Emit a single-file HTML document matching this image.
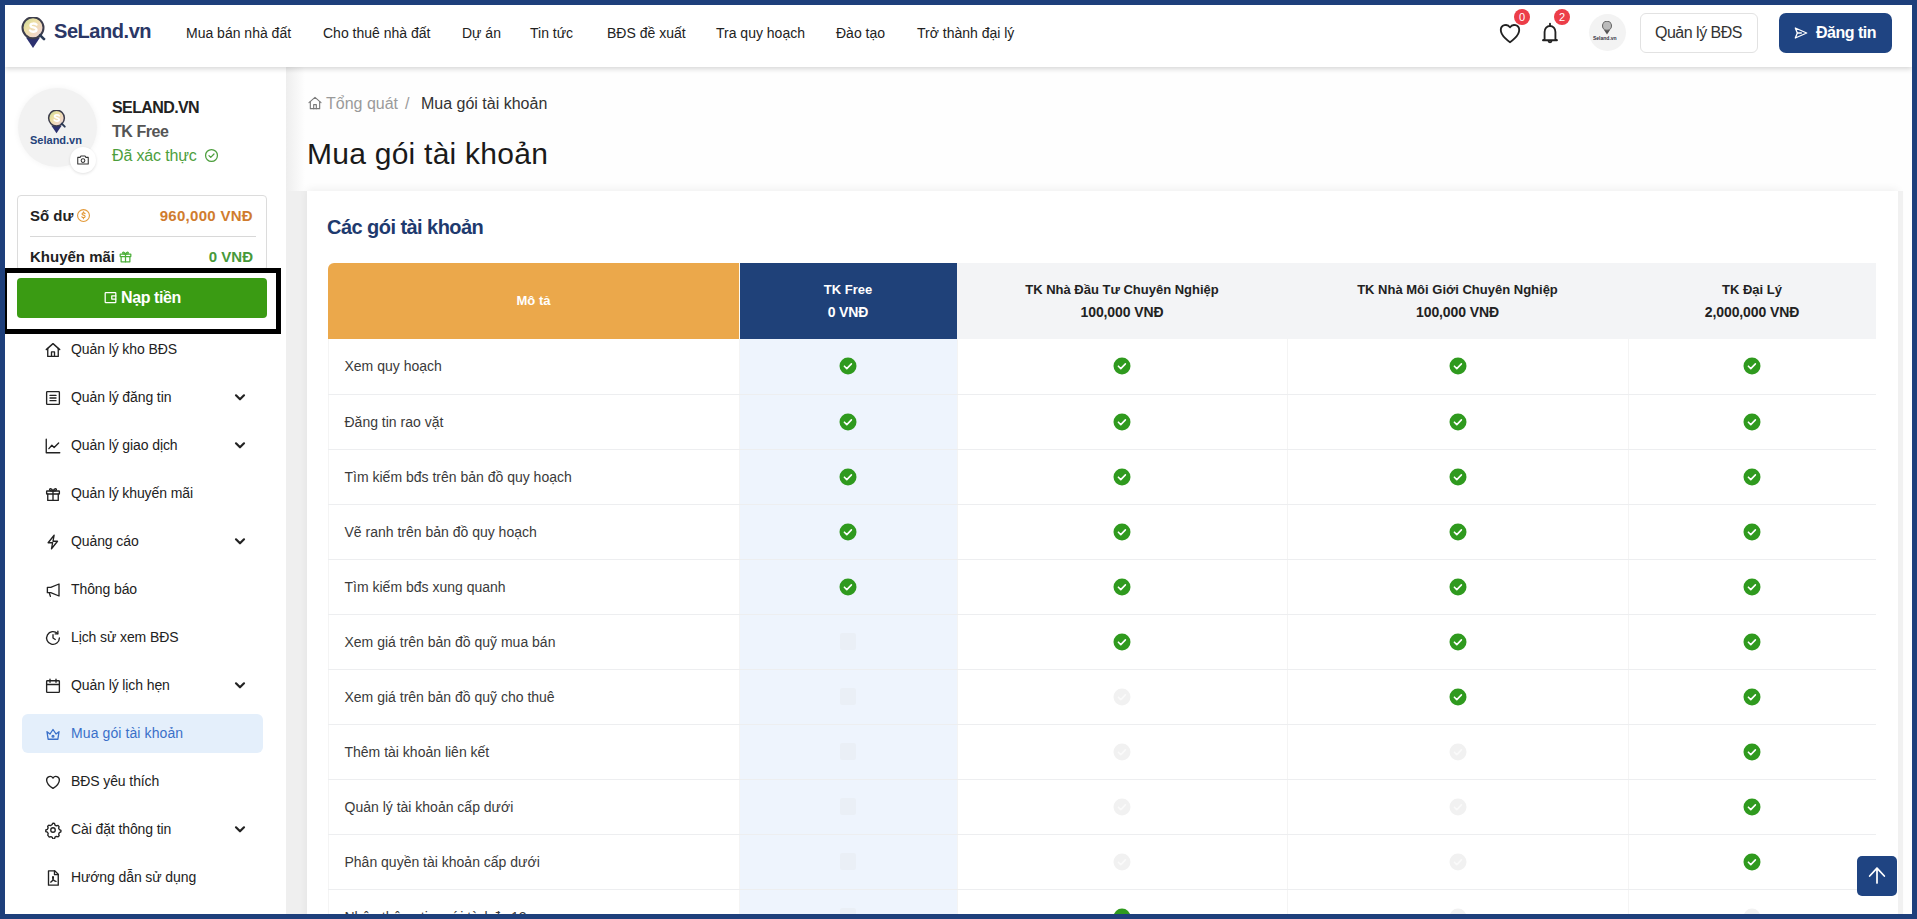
<!DOCTYPE html><html><head><meta charset="utf-8"><style>
*{box-sizing:border-box;margin:0;padding:0}
html,body{width:1917px;height:919px;overflow:hidden;background:#fefefe;font-family:"Liberation Sans",sans-serif;color:#222}
.a{position:absolute}
.t{position:absolute;white-space:nowrap}
.nav{position:absolute;top:25px;font-size:14px;line-height:16px;color:#222;white-space:nowrap}
.mi{position:absolute;left:71px;font-size:14px;line-height:16px;color:#222;white-space:nowrap;letter-spacing:-0.1px}
.ic{position:absolute;left:44px;width:18px;height:18px}
.ch{position:absolute;left:232px;width:16px;height:16px}
table{border-collapse:collapse;table-layout:fixed}
th{height:76px;font-size:13px;font-weight:bold;line-height:22px;text-align:center;background:#f3f4f6;color:#222;padding:0}
td{height:55px;border-bottom:1px solid #edeef0;border-left:1px solid #f4f4f4;font-size:14px;color:#3a3a3a;text-align:center;padding:0}
td.d{text-align:left;padding-left:16px}
b.p{font-size:14px;letter-spacing:-0.1px}
td.f{background:#eef4fd}
td svg{display:block;margin:auto}
</style></head><body>
<div class="a" style="left:286px;top:67px;width:21px;height:124px;background:linear-gradient(90deg,#eeeeee 0,#f2f2f2 5px,#fefefe 19px)"></div>
<div class="a" style="left:286px;top:191px;width:21px;height:728px;background:#efefef"></div>
<div class="a" style="left:307px;top:191px;width:1591px;height:740px;background:#fff;box-shadow:0 -2px 8px rgba(0,0,0,.06)"></div>
<div class="t" style="left:327px;top:216px;font-size:20px;line-height:22px;font-weight:bold;color:#1e3a6e;letter-spacing:-0.55px">Các gói tài khoản</div>
<div class="a" style="left:307px;top:95px"><svg width="16" height="16" viewBox="0 0 24 24" fill="none" stroke="#7a7a7a" stroke-width="1.7" stroke-linecap="round" stroke-linejoin="round"><path d="M3 11.5 12 3.5l9 8"/><path d="M5 9.8V20.5h14V9.8"/><path d="M10 20.5v-6h4v6"/></svg></div>
<div class="t" style="left:326px;top:95px;font-size:16px;line-height:18px;color:#9a9a9a">Tổng quát</div>
<div class="t" style="left:405px;top:95px;font-size:16px;line-height:18px;color:#9a9a9a">/</div>
<div class="t" style="left:421px;top:95px;font-size:16px;line-height:18px;color:#333">Mua gói tài khoản</div>
<div class="t" style="left:307px;top:138px;font-size:30px;line-height:32px;color:#1a1a1a;letter-spacing:0.25px">Mua gói tài khoản</div>
<table class="a" style="left:327.5px;top:263px;width:1548px"><colgroup><col style="width:411px"><col style="width:218px"><col style="width:330px"><col style="width:341px"><col style="width:248px"></colgroup><tr><th style="background:#eba84b;color:#fff;border-top-left-radius:6px">Mô tả</th><th style="background:#1f4179;color:#fff;box-shadow:inset 1px 0 0 #fdfaf2">TK Free<br><b class=p>0 VNĐ</b></th><th>TK Nhà Đầu Tư Chuyên Nghiệp<br><b class=p>100,000 VNĐ</b></th><th>TK Nhà Môi Giới Chuyên Nghiệp<br><b class=p>100,000 VNĐ</b></th><th>TK Đại Lý<br><b class=p>2,000,000 VNĐ</b></th></tr><tr><td class="d">Xem quy hoạch</td><td class="f"><svg width="18" height="18" viewBox="0 0 18 18"><circle cx="9" cy="9" r="8.5" fill="#2f9a1e"/><path d="M5.4 9.2l2.4 2.4 4.6-4.7" fill="none" stroke="#fff" stroke-width="1.6" stroke-linecap="round" stroke-linejoin="round"/></svg></td><td><svg width="18" height="18" viewBox="0 0 18 18"><circle cx="9" cy="9" r="8.5" fill="#2f9a1e"/><path d="M5.4 9.2l2.4 2.4 4.6-4.7" fill="none" stroke="#fff" stroke-width="1.6" stroke-linecap="round" stroke-linejoin="round"/></svg></td><td><svg width="18" height="18" viewBox="0 0 18 18"><circle cx="9" cy="9" r="8.5" fill="#2f9a1e"/><path d="M5.4 9.2l2.4 2.4 4.6-4.7" fill="none" stroke="#fff" stroke-width="1.6" stroke-linecap="round" stroke-linejoin="round"/></svg></td><td><svg width="18" height="18" viewBox="0 0 18 18"><circle cx="9" cy="9" r="8.5" fill="#2f9a1e"/><path d="M5.4 9.2l2.4 2.4 4.6-4.7" fill="none" stroke="#fff" stroke-width="1.6" stroke-linecap="round" stroke-linejoin="round"/></svg></td></tr><tr><td class="d">Đăng tin rao vặt</td><td class="f"><svg width="18" height="18" viewBox="0 0 18 18"><circle cx="9" cy="9" r="8.5" fill="#2f9a1e"/><path d="M5.4 9.2l2.4 2.4 4.6-4.7" fill="none" stroke="#fff" stroke-width="1.6" stroke-linecap="round" stroke-linejoin="round"/></svg></td><td><svg width="18" height="18" viewBox="0 0 18 18"><circle cx="9" cy="9" r="8.5" fill="#2f9a1e"/><path d="M5.4 9.2l2.4 2.4 4.6-4.7" fill="none" stroke="#fff" stroke-width="1.6" stroke-linecap="round" stroke-linejoin="round"/></svg></td><td><svg width="18" height="18" viewBox="0 0 18 18"><circle cx="9" cy="9" r="8.5" fill="#2f9a1e"/><path d="M5.4 9.2l2.4 2.4 4.6-4.7" fill="none" stroke="#fff" stroke-width="1.6" stroke-linecap="round" stroke-linejoin="round"/></svg></td><td><svg width="18" height="18" viewBox="0 0 18 18"><circle cx="9" cy="9" r="8.5" fill="#2f9a1e"/><path d="M5.4 9.2l2.4 2.4 4.6-4.7" fill="none" stroke="#fff" stroke-width="1.6" stroke-linecap="round" stroke-linejoin="round"/></svg></td></tr><tr><td class="d">Tìm kiếm bđs trên bản đồ quy hoạch</td><td class="f"><svg width="18" height="18" viewBox="0 0 18 18"><circle cx="9" cy="9" r="8.5" fill="#2f9a1e"/><path d="M5.4 9.2l2.4 2.4 4.6-4.7" fill="none" stroke="#fff" stroke-width="1.6" stroke-linecap="round" stroke-linejoin="round"/></svg></td><td><svg width="18" height="18" viewBox="0 0 18 18"><circle cx="9" cy="9" r="8.5" fill="#2f9a1e"/><path d="M5.4 9.2l2.4 2.4 4.6-4.7" fill="none" stroke="#fff" stroke-width="1.6" stroke-linecap="round" stroke-linejoin="round"/></svg></td><td><svg width="18" height="18" viewBox="0 0 18 18"><circle cx="9" cy="9" r="8.5" fill="#2f9a1e"/><path d="M5.4 9.2l2.4 2.4 4.6-4.7" fill="none" stroke="#fff" stroke-width="1.6" stroke-linecap="round" stroke-linejoin="round"/></svg></td><td><svg width="18" height="18" viewBox="0 0 18 18"><circle cx="9" cy="9" r="8.5" fill="#2f9a1e"/><path d="M5.4 9.2l2.4 2.4 4.6-4.7" fill="none" stroke="#fff" stroke-width="1.6" stroke-linecap="round" stroke-linejoin="round"/></svg></td></tr><tr><td class="d">Vẽ ranh trên bản đồ quy hoạch</td><td class="f"><svg width="18" height="18" viewBox="0 0 18 18"><circle cx="9" cy="9" r="8.5" fill="#2f9a1e"/><path d="M5.4 9.2l2.4 2.4 4.6-4.7" fill="none" stroke="#fff" stroke-width="1.6" stroke-linecap="round" stroke-linejoin="round"/></svg></td><td><svg width="18" height="18" viewBox="0 0 18 18"><circle cx="9" cy="9" r="8.5" fill="#2f9a1e"/><path d="M5.4 9.2l2.4 2.4 4.6-4.7" fill="none" stroke="#fff" stroke-width="1.6" stroke-linecap="round" stroke-linejoin="round"/></svg></td><td><svg width="18" height="18" viewBox="0 0 18 18"><circle cx="9" cy="9" r="8.5" fill="#2f9a1e"/><path d="M5.4 9.2l2.4 2.4 4.6-4.7" fill="none" stroke="#fff" stroke-width="1.6" stroke-linecap="round" stroke-linejoin="round"/></svg></td><td><svg width="18" height="18" viewBox="0 0 18 18"><circle cx="9" cy="9" r="8.5" fill="#2f9a1e"/><path d="M5.4 9.2l2.4 2.4 4.6-4.7" fill="none" stroke="#fff" stroke-width="1.6" stroke-linecap="round" stroke-linejoin="round"/></svg></td></tr><tr><td class="d">Tìm kiếm bđs xung quanh</td><td class="f"><svg width="18" height="18" viewBox="0 0 18 18"><circle cx="9" cy="9" r="8.5" fill="#2f9a1e"/><path d="M5.4 9.2l2.4 2.4 4.6-4.7" fill="none" stroke="#fff" stroke-width="1.6" stroke-linecap="round" stroke-linejoin="round"/></svg></td><td><svg width="18" height="18" viewBox="0 0 18 18"><circle cx="9" cy="9" r="8.5" fill="#2f9a1e"/><path d="M5.4 9.2l2.4 2.4 4.6-4.7" fill="none" stroke="#fff" stroke-width="1.6" stroke-linecap="round" stroke-linejoin="round"/></svg></td><td><svg width="18" height="18" viewBox="0 0 18 18"><circle cx="9" cy="9" r="8.5" fill="#2f9a1e"/><path d="M5.4 9.2l2.4 2.4 4.6-4.7" fill="none" stroke="#fff" stroke-width="1.6" stroke-linecap="round" stroke-linejoin="round"/></svg></td><td><svg width="18" height="18" viewBox="0 0 18 18"><circle cx="9" cy="9" r="8.5" fill="#2f9a1e"/><path d="M5.4 9.2l2.4 2.4 4.6-4.7" fill="none" stroke="#fff" stroke-width="1.6" stroke-linecap="round" stroke-linejoin="round"/></svg></td></tr><tr><td class="d">Xem giá trên bản đồ quỹ mua bán</td><td class="f"><div style="width:16px;height:17px;margin:auto;background:#eaeff6;border-radius:2px"></div></td><td><svg width="18" height="18" viewBox="0 0 18 18"><circle cx="9" cy="9" r="8.5" fill="#2f9a1e"/><path d="M5.4 9.2l2.4 2.4 4.6-4.7" fill="none" stroke="#fff" stroke-width="1.6" stroke-linecap="round" stroke-linejoin="round"/></svg></td><td><svg width="18" height="18" viewBox="0 0 18 18"><circle cx="9" cy="9" r="8.5" fill="#2f9a1e"/><path d="M5.4 9.2l2.4 2.4 4.6-4.7" fill="none" stroke="#fff" stroke-width="1.6" stroke-linecap="round" stroke-linejoin="round"/></svg></td><td><svg width="18" height="18" viewBox="0 0 18 18"><circle cx="9" cy="9" r="8.5" fill="#2f9a1e"/><path d="M5.4 9.2l2.4 2.4 4.6-4.7" fill="none" stroke="#fff" stroke-width="1.6" stroke-linecap="round" stroke-linejoin="round"/></svg></td></tr><tr><td class="d">Xem giá trên bản đồ quỹ cho thuê</td><td class="f"><div style="width:16px;height:17px;margin:auto;background:#eaeff6;border-radius:2px"></div></td><td><svg width="18" height="18" viewBox="0 0 18 18"><circle cx="9" cy="9" r="8.5" fill="#f1f1f1"/><path d="M5.4 9.2l2.4 2.4 4.6-4.7" fill="none" stroke="#fafafa" stroke-width="1.6" stroke-linecap="round" stroke-linejoin="round"/></svg></td><td><svg width="18" height="18" viewBox="0 0 18 18"><circle cx="9" cy="9" r="8.5" fill="#2f9a1e"/><path d="M5.4 9.2l2.4 2.4 4.6-4.7" fill="none" stroke="#fff" stroke-width="1.6" stroke-linecap="round" stroke-linejoin="round"/></svg></td><td><svg width="18" height="18" viewBox="0 0 18 18"><circle cx="9" cy="9" r="8.5" fill="#2f9a1e"/><path d="M5.4 9.2l2.4 2.4 4.6-4.7" fill="none" stroke="#fff" stroke-width="1.6" stroke-linecap="round" stroke-linejoin="round"/></svg></td></tr><tr><td class="d">Thêm tài khoản liên kết</td><td class="f"><div style="width:16px;height:17px;margin:auto;background:#eaeff6;border-radius:2px"></div></td><td><svg width="18" height="18" viewBox="0 0 18 18"><circle cx="9" cy="9" r="8.5" fill="#f1f1f1"/><path d="M5.4 9.2l2.4 2.4 4.6-4.7" fill="none" stroke="#fafafa" stroke-width="1.6" stroke-linecap="round" stroke-linejoin="round"/></svg></td><td><svg width="18" height="18" viewBox="0 0 18 18"><circle cx="9" cy="9" r="8.5" fill="#f1f1f1"/><path d="M5.4 9.2l2.4 2.4 4.6-4.7" fill="none" stroke="#fafafa" stroke-width="1.6" stroke-linecap="round" stroke-linejoin="round"/></svg></td><td><svg width="18" height="18" viewBox="0 0 18 18"><circle cx="9" cy="9" r="8.5" fill="#2f9a1e"/><path d="M5.4 9.2l2.4 2.4 4.6-4.7" fill="none" stroke="#fff" stroke-width="1.6" stroke-linecap="round" stroke-linejoin="round"/></svg></td></tr><tr><td class="d">Quản lý tài khoản cấp dưới</td><td class="f"><div style="width:16px;height:17px;margin:auto;background:#eaeff6;border-radius:2px"></div></td><td><svg width="18" height="18" viewBox="0 0 18 18"><circle cx="9" cy="9" r="8.5" fill="#f1f1f1"/><path d="M5.4 9.2l2.4 2.4 4.6-4.7" fill="none" stroke="#fafafa" stroke-width="1.6" stroke-linecap="round" stroke-linejoin="round"/></svg></td><td><svg width="18" height="18" viewBox="0 0 18 18"><circle cx="9" cy="9" r="8.5" fill="#f1f1f1"/><path d="M5.4 9.2l2.4 2.4 4.6-4.7" fill="none" stroke="#fafafa" stroke-width="1.6" stroke-linecap="round" stroke-linejoin="round"/></svg></td><td><svg width="18" height="18" viewBox="0 0 18 18"><circle cx="9" cy="9" r="8.5" fill="#2f9a1e"/><path d="M5.4 9.2l2.4 2.4 4.6-4.7" fill="none" stroke="#fff" stroke-width="1.6" stroke-linecap="round" stroke-linejoin="round"/></svg></td></tr><tr><td class="d">Phân quyền tài khoản cấp dưới</td><td class="f"><div style="width:16px;height:17px;margin:auto;background:#eaeff6;border-radius:2px"></div></td><td><svg width="18" height="18" viewBox="0 0 18 18"><circle cx="9" cy="9" r="8.5" fill="#f1f1f1"/><path d="M5.4 9.2l2.4 2.4 4.6-4.7" fill="none" stroke="#fafafa" stroke-width="1.6" stroke-linecap="round" stroke-linejoin="round"/></svg></td><td><svg width="18" height="18" viewBox="0 0 18 18"><circle cx="9" cy="9" r="8.5" fill="#f1f1f1"/><path d="M5.4 9.2l2.4 2.4 4.6-4.7" fill="none" stroke="#fafafa" stroke-width="1.6" stroke-linecap="round" stroke-linejoin="round"/></svg></td><td><svg width="18" height="18" viewBox="0 0 18 18"><circle cx="9" cy="9" r="8.5" fill="#2f9a1e"/><path d="M5.4 9.2l2.4 2.4 4.6-4.7" fill="none" stroke="#fff" stroke-width="1.6" stroke-linecap="round" stroke-linejoin="round"/></svg></td></tr><tr><td class="d">Nhận thông tin mới từ bđs 12</td><td class="f"><div style="width:16px;height:17px;margin:auto;background:#eaeff6;border-radius:2px"></div></td><td><svg width="18" height="18" viewBox="0 0 18 18"><circle cx="9" cy="9" r="8.5" fill="#2f9a1e"/><path d="M5.4 9.2l2.4 2.4 4.6-4.7" fill="none" stroke="#fff" stroke-width="1.6" stroke-linecap="round" stroke-linejoin="round"/></svg></td><td><svg width="18" height="18" viewBox="0 0 18 18"><circle cx="9" cy="9" r="8.5" fill="#f1f1f1"/><path d="M5.4 9.2l2.4 2.4 4.6-4.7" fill="none" stroke="#fafafa" stroke-width="1.6" stroke-linecap="round" stroke-linejoin="round"/></svg></td><td><svg width="18" height="18" viewBox="0 0 18 18"><circle cx="9" cy="9" r="8.5" fill="#f1f1f1"/><path d="M5.4 9.2l2.4 2.4 4.6-4.7" fill="none" stroke="#fafafa" stroke-width="1.6" stroke-linecap="round" stroke-linejoin="round"/></svg></td></tr></table>
<div class="a" style="left:5px;top:67px;width:281px;height:852px;background:#fff"></div>
<div class="a" style="left:18px;top:88px;width:79px;height:79px;border-radius:50%;background:#f2f2f2;box-shadow:0 0 6px rgba(0,0,0,.05)"></div>
<div class="a" style="left:46px;top:110px"><svg width="21" height="24" viewBox="0 0 28 32"><defs><linearGradient id="lg" x1="0" y1="0" x2="1" y2="1"><stop offset="0" stop-color="#b9d39a"/><stop offset=".35" stop-color="#ece0a2"/><stop offset=".7" stop-color="#f2d8c6"/><stop offset="1" stop-color="#d5d5e2"/></linearGradient></defs><path d="M7 20.5 14 31 21 20.5z" fill="#2c3170"/><circle cx="14" cy="10.8" r="10.5" fill="url(#lg)" stroke="#3d3d4c" stroke-width="2"/><path d="M17.5 7.6c-1-1.4-6-1.6-6 .8 0 2.6 6 1.4 6 4.4 0 2.4-5 2.6-6.5.6" stroke="#fff" stroke-width="2.4" fill="none" stroke-linecap="round"/><path d="M21 18.2l4 4" stroke="#2b3a55" stroke-width="2.6" stroke-linecap="round"/></svg></div>
<div class="t" style="left:30px;top:134px;font-size:11px;line-height:12px;font-weight:bold;color:#24427a">Seland.vn</div>
<div class="a" style="left:70px;top:147px;width:26px;height:26px;border-radius:50%;background:#fff;box-shadow:0 1px 3px rgba(0,0,0,.12)"></div>
<div class="a" style="left:76px;top:153px"><svg width="14" height="14" viewBox="0 0 24 24" fill="none" stroke="#333" stroke-width="1.8" stroke-linecap="round" stroke-linejoin="round"><path d="M3 7.5h4l1.5-2.5h7L17 7.5h4V19H3z"/><circle cx="12" cy="13" r="3.2"/></svg></div>
<div class="t" style="left:112px;top:100px;font-size:16px;line-height:16px;font-weight:bold;color:#222;letter-spacing:-0.6px">SELAND.VN</div>
<div class="t" style="left:112px;top:124px;font-size:16px;line-height:16px;font-weight:bold;color:#555;letter-spacing:-0.45px">TK Free</div>
<div class="t" style="left:112px;top:148px;font-size:16px;line-height:16px;color:#4c9e3c;letter-spacing:-0.15px">Đã xác thực</div>
<div class="a" style="left:204px;top:148px"><svg width="15" height="15" viewBox="0 0 24 24" fill="none" stroke="#4c9e3c" stroke-width="2" stroke-linecap="round" stroke-linejoin="round"><circle cx="12" cy="12" r="9.5"/><path d="M8 12.2l2.8 2.8 5.2-5.4"/></svg></div>
<div class="a" style="left:17px;top:195px;width:250px;height:76px;border:1px solid #dcdcdc;border-radius:4px"></div>
<div class="t" style="left:30px;top:207px;font-size:15px;line-height:17px;font-weight:bold;color:#222">Số dư</div>
<div class="a" style="left:76px;top:208px"><svg width="15" height="15" viewBox="0 0 24 24" fill="none" stroke="#e39a3a" stroke-width="1.8" stroke-linecap="round" stroke-linejoin="round"><circle cx="12" cy="12" r="9.5"/><path d="M14.5 9c-.5-1-1.5-1.3-2.5-1.3-1.4 0-2.4.7-2.4 1.8 0 2.4 5 1.3 5 3.9 0 1.1-1 1.9-2.6 1.9-1.1 0-2.2-.5-2.6-1.4M12 6v1.7M12 15.3V17"/></svg></div>
<div class="t" style="right:1664px;top:207px;font-size:15px;line-height:17px;font-weight:bold;color:#d07c2e;letter-spacing:0.3px">960,000 VNĐ</div>
<div class="a" style="left:30px;top:236px;width:226px;height:1px;background:#d8d8d8"></div>
<div class="t" style="left:30px;top:248px;font-size:15px;line-height:17px;font-weight:bold;color:#222">Khuyến mãi</div>
<div class="a" style="left:118px;top:249px"><svg width="15" height="15" viewBox="0 0 24 24" fill="none" stroke="#4caf3a" stroke-width="2" stroke-linecap="round" stroke-linejoin="round"><rect x="3.5" y="8" width="17" height="4" rx=".5"/><path d="M5 12v8.5h14V12"/><path d="M12 8v12.5"/><path d="M12 8C10 4 7 4.5 7.5 6.5S12 8 12 8zM12 8c2-4 5-3.5 4.5-1.5S12 8 12 8z"/></svg></div>
<div class="t" style="right:1664px;top:248px;font-size:15px;line-height:17px;font-weight:bold;color:#47993a">0 VNĐ</div>
<div class="a" style="left:17px;top:278px;width:250px;height:40px;background:#3a9b13;border-radius:4px"></div>
<div class="a" style="left:103px;top:290px"><svg width="15" height="15" viewBox="0 0 24 24" fill="none" stroke="#fff" stroke-width="2" stroke-linecap="round" stroke-linejoin="round"><rect x="3.5" y="4" width="17" height="16" rx="1"/><path d="M20.5 9.5H14v5h6.5"/></svg></div>
<div class="t" style="left:121px;top:289px;font-size:16px;line-height:18px;font-weight:bold;color:#fff;letter-spacing:-0.4px">Nạp tiền</div>
<div class="a" style="left:2px;top:268px;width:279px;height:66px;border:5px solid #000"></div>
<div class="ic" style="top:341px"><svg width="18" height="18" viewBox="0 0 24 24" fill="none" stroke="#222" stroke-width="1.8" stroke-linecap="round" stroke-linejoin="round"><path d="M3 11.5 12 3.5l9 8"/><path d="M5 9.8V20.5h14V9.8"/><path d="M10 20.5v-6h4v6"/></svg></div>
<div class="mi" style="top:341px;color:#222">Quản lý kho BĐS</div>
<div class="ic" style="top:389px"><svg width="18" height="18" viewBox="0 0 24 24" fill="none" stroke="#222" stroke-width="1.8" stroke-linecap="round" stroke-linejoin="round"><rect x="3.5" y="3.5" width="17" height="17" rx="1"/><path d="M8 8.5h8M8 12h8M8 15.5h8"/></svg></div>
<div class="mi" style="top:389px;color:#222">Quản lý đăng tin</div>
<div class="ch" style="top:389px"><svg width="16" height="16" viewBox="0 0 24 24" fill="none" stroke="#222" stroke-width="3.3" stroke-linecap="round" stroke-linejoin="round"><path d="M6 9.5l6 6 6-6"/></svg></div>
<div class="ic" style="top:437px"><svg width="18" height="18" viewBox="0 0 24 24" fill="none" stroke="#222" stroke-width="1.8" stroke-linecap="round" stroke-linejoin="round"><path d="M3 3v18h18"/><path d="M6.5 15.5l4-4.5 3 3 6-6"/></svg></div>
<div class="mi" style="top:437px;color:#222">Quản lý giao dịch</div>
<div class="ch" style="top:437px"><svg width="16" height="16" viewBox="0 0 24 24" fill="none" stroke="#222" stroke-width="3.3" stroke-linecap="round" stroke-linejoin="round"><path d="M6 9.5l6 6 6-6"/></svg></div>
<div class="ic" style="top:485px"><svg width="18" height="18" viewBox="0 0 24 24" fill="none" stroke="#222" stroke-width="1.8" stroke-linecap="round" stroke-linejoin="round"><rect x="3.5" y="8" width="17" height="4" rx=".5"/><path d="M5 12v8.5h14V12"/><path d="M12 8v12.5"/><path d="M12 8C10 4 7 4.5 7.5 6.5S12 8 12 8zM12 8c2-4 5-3.5 4.5-1.5S12 8 12 8z"/></svg></div>
<div class="mi" style="top:485px;color:#222">Quản lý khuyến mãi</div>
<div class="ic" style="top:533px"><svg width="18" height="18" viewBox="0 0 24 24" fill="none" stroke="#222" stroke-width="1.8" stroke-linecap="round" stroke-linejoin="round"><path d="M13.5 3 5.5 13h6l-1.5 8 8-10h-6z"/></svg></div>
<div class="mi" style="top:533px;color:#222">Quảng cáo</div>
<div class="ch" style="top:533px"><svg width="16" height="16" viewBox="0 0 24 24" fill="none" stroke="#222" stroke-width="3.3" stroke-linecap="round" stroke-linejoin="round"><path d="M6 9.5l6 6 6-6"/></svg></div>
<div class="ic" style="top:581px"><svg width="18" height="18" viewBox="0 0 24 24" fill="none" stroke="#222" stroke-width="1.8" stroke-linecap="round" stroke-linejoin="round"><path d="M20 4v16L9 15.5H4.5v-7H9z"/><path d="M7 15.5l1.5 5"/></svg></div>
<div class="mi" style="top:581px;color:#222">Thông báo</div>
<div class="ic" style="top:629px"><svg width="18" height="18" viewBox="0 0 24 24" fill="none" stroke="#222" stroke-width="1.8" stroke-linecap="round" stroke-linejoin="round"><path d="M20.5 12a8.5 8.5 0 1 1-2.5-6"/><path d="M18.5 3v3.5H15"/><path d="M12 7.5V12l3 2"/></svg></div>
<div class="mi" style="top:629px;color:#222">Lịch sử xem BĐS</div>
<div class="ic" style="top:677px"><svg width="18" height="18" viewBox="0 0 24 24" fill="none" stroke="#222" stroke-width="1.8" stroke-linecap="round" stroke-linejoin="round"><rect x="3.5" y="5" width="17" height="15.5" rx="1"/><path d="M3.5 10h17M8 3v4M16 3v4"/></svg></div>
<div class="mi" style="top:677px;color:#222">Quản lý lịch hẹn</div>
<div class="ch" style="top:677px"><svg width="16" height="16" viewBox="0 0 24 24" fill="none" stroke="#222" stroke-width="3.3" stroke-linecap="round" stroke-linejoin="round"><path d="M6 9.5l6 6 6-6"/></svg></div>
<div class="a" style="left:22px;top:714px;width:241px;height:39px;background:#e4effb;border-radius:6px"></div>
<div class="ic" style="top:725px"><svg width="18" height="18" viewBox="0 0 24 24" fill="none" stroke="#3a70c9" stroke-width="1.8" stroke-linecap="round" stroke-linejoin="round"><path d="M4 9l4 3 4-6 4 6 4-3-1.5 10h-13z"/><circle cx="12" cy="15" r="1.2"/></svg></div>
<div class="mi" style="top:725px;color:#3a70c9;letter-spacing:0.1px">Mua gói tài khoản</div>
<div class="ic" style="top:773px"><svg width="18" height="18" viewBox="0 0 24 24" fill="none" stroke="#222" stroke-width="1.8" stroke-linecap="round" stroke-linejoin="round"><path d="M12 20.5S3.5 15 3.5 9.2A4.6 4.6 0 0 1 12 6.8a4.6 4.6 0 0 1 8.5 2.4C20.5 15 12 20.5 12 20.5z"/></svg></div>
<div class="mi" style="top:773px;color:#222">BĐS yêu thích</div>
<div class="ic" style="top:821px"><svg width="18" height="18" viewBox="0 0 24 24" fill="none" stroke="#222" stroke-width="1.8" stroke-linecap="round" stroke-linejoin="round"><circle cx="12" cy="12" r="3"/><path d="M12 2.8l2 .4.6 2.2 1.9 1.1 2.2-.6 1.4 1.6-.6 2.2 1.1 1.9 2 .9-.1 2.1-2 .9-.9 1.9.6 2.2-1.5 1.5-2.2-.6-1.9 1.1-.6 2.2-2.1.1-.8-2.1-1.9-1-2.2.6L5 18.9l.6-2.2-1.1-1.9-2.1-.6V12l2-.8 1.1-1.9L4.9 7l1.5-1.5 2.2.6 1.9-1.1z"/></svg></div>
<div class="mi" style="top:821px;color:#222">Cài đặt thông tin</div>
<div class="ch" style="top:821px"><svg width="16" height="16" viewBox="0 0 24 24" fill="none" stroke="#222" stroke-width="3.3" stroke-linecap="round" stroke-linejoin="round"><path d="M6 9.5l6 6 6-6"/></svg></div>
<div class="ic" style="top:869px"><svg width="18" height="18" viewBox="0 0 24 24" fill="none" stroke="#222" stroke-width="1.8" stroke-linecap="round" stroke-linejoin="round"><path d="M6 2.5h8.5l4.5 4.5v14.5H6z"/><path d="M14 2.5V7.5h5"/><path d="M9 17.5c2-1 3.5-4 3.5-6.5 0-1-1-1-1 0 0 2.5 2 5 4.5 5.5"/></svg></div>
<div class="mi" style="top:869px;color:#222">Hướng dẫn sử dụng</div>
<div class="a" style="left:5px;top:5px;width:1907px;height:62px;background:#fff;box-shadow:0 2px 5px rgba(0,0,0,.16)"></div>
<div class="a" style="left:19px;top:17px"><svg width="28" height="32" viewBox="0 0 28 32"><defs><linearGradient id="lg" x1="0" y1="0" x2="1" y2="1"><stop offset="0" stop-color="#b9d39a"/><stop offset=".35" stop-color="#ece0a2"/><stop offset=".7" stop-color="#f2d8c6"/><stop offset="1" stop-color="#d5d5e2"/></linearGradient></defs><path d="M7 20.5 14 31 21 20.5z" fill="#2c3170"/><circle cx="14" cy="10.8" r="10.5" fill="url(#lg)" stroke="#3d3d4c" stroke-width="2"/><path d="M17.5 7.6c-1-1.4-6-1.6-6 .8 0 2.6 6 1.4 6 4.4 0 2.4-5 2.6-6.5.6" stroke="#fff" stroke-width="2.4" fill="none" stroke-linecap="round"/><path d="M21 18.2l4 4" stroke="#2b3a55" stroke-width="2.6" stroke-linecap="round"/></svg></div>
<div class="t" style="left:54px;top:20px;font-size:20px;line-height:23px;font-weight:bold;color:#2b3766;letter-spacing:-0.45px">SeLand.vn</div>
<div class="nav" style="left:186px">Mua bán nhà đất</div>
<div class="nav" style="left:323px">Cho thuê nhà đất</div>
<div class="nav" style="left:462px">Dự án</div>
<div class="nav" style="left:530px">Tin tức</div>
<div class="nav" style="left:607px">BĐS đề xuất</div>
<div class="nav" style="left:716px">Tra quy hoạch</div>
<div class="nav" style="left:836px">Đào tạo</div>
<div class="nav" style="left:917px">Trở thành đại lý</div>
<div class="a" style="left:1497px;top:20px"><svg width="26" height="26" viewBox="0 0 24 24" fill="none" stroke="#222" stroke-width="1.7" stroke-linecap="round" stroke-linejoin="round"><path d="M12 20.5S3.5 15 3.5 9.2A4.6 4.6 0 0 1 12 6.8a4.6 4.6 0 0 1 8.5 2.4C20.5 15 12 20.5 12 20.5z"/></svg></div>
<div class="a" style="left:1537px;top:20px"><svg width="26" height="26" viewBox="0 0 24 24" fill="none" stroke="#222" stroke-width="1.7" stroke-linecap="round" stroke-linejoin="round"><path d="M7 17.5V11a5 5.5 0 0 1 10 0v6.5l1.5 1.2H5.5z"/><path d="M12 3.5V5.5"/><path d="M10.6 19.2a1.4 1.4 0 0 0 2.8 0"/></svg></div>
<div class="a" style="left:1514px;top:9px;width:16px;height:16px;border-radius:50%;background:#ec3d48;color:#fff;font-size:11px;line-height:16px;text-align:center">0</div>
<div class="a" style="left:1554px;top:9px;width:16px;height:16px;border-radius:50%;background:#ec3d48;color:#fff;font-size:11px;line-height:16px;text-align:center">2</div>
<div class="a" style="left:1589px;top:14px;width:37px;height:37px;border-radius:50%;background:#f3f3f3"></div>
<div class="t" style="left:1593px;top:35px;font-size:5px;line-height:6px;font-weight:bold;color:#334">Seland.vn</div>
<div class="a" style="left:1601px;top:21px"><svg width="12" height="14" viewBox="0 0 28 32"><path d="M7 20.5 14 31 21 20.5z" fill="#555"/><circle cx="14" cy="10.8" r="10.5" fill="#bbb" stroke="#666" stroke-width="2.5"/></svg></div>
<div class="a" style="left:1640px;top:13px;width:118px;height:40px;border:1px solid #e2e2e2;border-radius:6px;background:#fff"></div>
<div class="t" style="left:1655px;top:24px;font-size:16px;line-height:18px;color:#333;letter-spacing:-0.5px">Quản lý BĐS</div>
<div class="a" style="left:1779px;top:13px;width:113px;height:40px;border-radius:7px;background:#1f4482"></div>
<div class="a" style="left:1793px;top:25px"><svg width="16" height="16" viewBox="0 0 24 24" fill="none" stroke="#fff" stroke-width="2" stroke-linecap="round" stroke-linejoin="round"><path d="M3.5 4.5l17 7.5-17 7.5 3-7.5z"/><path d="M6.5 12h6"/></svg></div>
<div class="t" style="left:1816px;top:24px;font-size:16px;line-height:18px;font-weight:bold;color:#fff;letter-spacing:-0.5px">Đăng tin</div>
<div class="a" style="left:1857px;top:856px;width:40px;height:40px;border-radius:5px;background:#1f4482"></div>
<div class="a" style="left:1866px;top:865px"><svg width="22" height="22" viewBox="0 0 24 24" fill="none" stroke="#fff" stroke-width="1.9" stroke-linecap="round" stroke-linejoin="round"><path d="M12 19.5V3.5M4 12 12 3.5l8 8.5"/></svg></div>
<div class="a" style="left:1898px;top:191px;width:5px;height:728px;background:#f1f1f1"></div>
<div class="a" style="left:0;top:0;width:1917px;height:5px;background:#1e3f7b"></div>
<div class="a" style="left:0;top:0;width:5px;height:919px;background:#1e3f7b"></div>
<div class="a" style="left:1912px;top:0;width:5px;height:919px;background:#1e3f7b"></div>
<div class="a" style="left:0;top:914px;width:1917px;height:5px;background:#1e3f7b"></div>
</body></html>
